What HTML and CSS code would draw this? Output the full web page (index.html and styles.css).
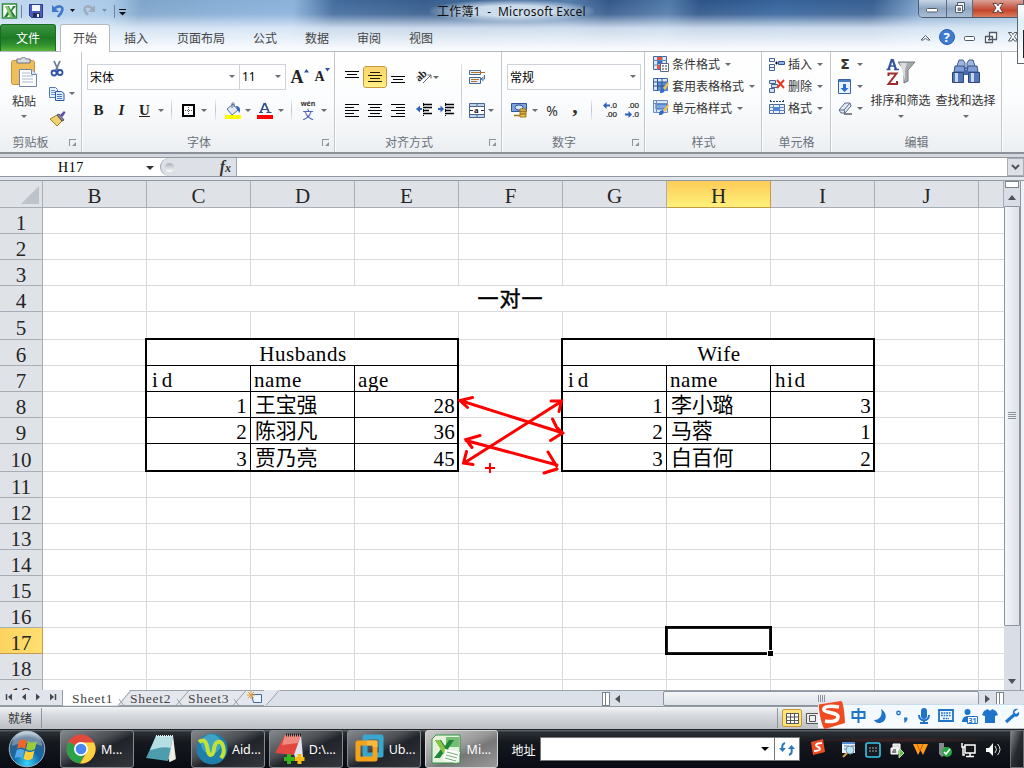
FILE: index.html
```html
<!DOCTYPE html>
<html lang="zh-CN">
<head>
<meta charset="utf-8">
<title>工作簿1 - Microsoft Excel</title>
<link rel="stylesheet" href="styles.css">
</head>
<body>
<div class="window">
  <header class="chrome">
    <div class="titlebar">
      <div class="quick">
        <svg width="124" height="24" viewBox="0 0 124 24">
          <rect x="2.500" y="4" width="14" height="14" fill="#fff" stroke="#2d8b38" stroke-width="1.500"/><path d="M5 6h4l2 4 2-4h3l-4 5 4 6h-4l-2-4-3 4H4l4-6z" fill="#25833a"/><path d="M5 6h3l5 11h-3z" fill="#8acb6f"/>
          <path d="M21.500 5v13M114.500 5v13" stroke="#71849a"/>
          <path d="M29.500 4.500h13v13H31.500l-2-2z" fill="#4c5cb8" stroke="#293c8e"/><path d="M32 5h8v6h-8z" fill="#f2f6ff"/><path d="M33 13h7v4h-7z" fill="#242f57"/><path d="M37 14h2v3h-2z" fill="#fff"/>
          <path d="M54 9c5-5 10-2 8 2-1 3-3 4-4 6" fill="none" stroke="#3f78c9" stroke-width="2.600"/><path d="M52 5v7h7z" fill="#3f78c9"/>
          <path d="M70 9h5l-2.500 3z" fill="#111"/>
          <path d="M93 9c-5-5-10-2-8 2 1 2 2 3 3 4" fill="none" stroke="#9dabba" stroke-width="2.400"/><path d="M95 5v7h-7z" fill="#9dabba"/>
          <path d="M102 9h5l-2.500 3z" fill="#7d8ea0"/>
          <path d="M119 9.500h7" stroke="#111"/><path d="M119 12h7l-3.500 3.500z" fill="#111"/>
        </svg>
      </div>
      <div class="caption">工作簿1&nbsp; -&nbsp; Microsoft Excel</div>
      <div class="winbtns">
        <span class="wb wmin"><svg width="14" height="16"><rect x="1.500" y="8.500" width="11" height="3.500" rx="1" fill="#fff" stroke="#555d69"/></svg></span>
        <span class="wb wmax"><svg width="14" height="16"><path d="M4.500 2.500h7v8h-7z" fill="#eee" stroke="#555d69"/><path d="M2.500 5.500h7v7h-7z" fill="#fff" stroke="#555d69"/><path d="M5 8h2.500v2.500H5z" fill="#8798af" stroke="#555d69" stroke-width=".8"/></svg></span>
        <span class="wb wclose"><svg width="14" height="16"><path d="M2 3.500h3.500L7 5.800l1.500-2.300H12L9 8l3 4.500H8.500L7 10.300 5.500 12.500H2L5 8z" fill="#fff" stroke="#56363c" stroke-width=".9"/></svg></span>
      </div>
    </div>
    <nav class="tabs">
      <span class="file">文件</span><span class="tab active">开始</span><span class="tab t2">插入</span><span class="tab t3">页面布局</span><span class="tab t4">公式</span><span class="tab t5">数据</span><span class="tab t5">审阅</span><span class="tab t5">视图</span>
      <svg class="help" width="106" height="28" viewBox="0 0 106 28">
        <path d="M3 16l4.500-4.500L12 16H9.500L7.500 14l-2 2z" fill="#fff" stroke="#505a66"/>
        <circle cx="29" cy="13" r="7.500" fill="#3f7bd0" stroke="#2b5eae"/><text x="25.500" y="18" class="q">?</text>
        <rect x="46.500" y="12.500" width="10" height="4" rx="1" fill="#fff" stroke="#505a66"/>
        <path d="M71.500 8.500h7v7h-7zM67.500 12.500h7v6h-7z" fill="#fff" stroke="#505a66" stroke-width="1.300"/><path d="M70 15h2v1.500h-2z" fill="#505a66"/>
        <path d="M90.500 8.500h3l1.500 2 1.500-2h3l-3 4 3 4.500h-3l-1.500-2.500-1.500 2.500h-3l3-4.500z" fill="#fff" stroke="#505a66"/>
      </svg>
    </nav>
  </header>

  <section class="ribbon">
    <div class="group g-clip">
      <div class="body row top">
        <div class="big paste">
          <svg width="28" height="32" viewBox="0 0 28 32"><rect x="1.500" y="3.500" width="23" height="24" rx="2" fill="#f0bd5c" stroke="#c99239"/><path d="M7 2h4c0-2 5-2 5 0h4v4H7z" fill="#d7dce2" stroke="#6d747c"/><path d="M9.500 12.500h12l5 5v12h-17z" fill="#fff" stroke="#6d83a8"/><path d="M12 16h8M12 19h11M12 22h11M12 25h11" stroke="#a9b8d0"/><path d="M21.500 12.500v5h5" fill="#dce6f5" stroke="#6d83a8"/></svg>
          <span>粘贴</span><i class="dd"></i>
        </div>
        <div class="stack">
          <div class="row"><svg width="16" height="18" viewBox="0 0 16 18"><path d="M5 1l4.500 10M11 1L6.500 11" stroke="#6b7d95" stroke-width="1.800"/><circle cx="5" cy="13" r="2.500" fill="none" stroke="#2b52ad" stroke-width="1.800"/><circle cx="11" cy="12.500" r="2.500" fill="none" stroke="#2b52ad" stroke-width="1.800"/></svg></div>
          <div class="row"><svg width="16" height="16" viewBox="0 0 16 16"><path d="M.5 1.500h6l2 2v8h-8z" fill="#e8f1ff" stroke="#5377b0"/><path d="M2 4.500h4M2 6.500h4M2 8.500h4" stroke="#6b96d7"/><path d="M6.500 5.500h6l2.500 2v7H6.500z" fill="#dceaff" stroke="#2f579c"/><path d="M8 8.500h5M8 10.500h5M8 12.500h5" stroke="#4a79c2"/></svg><i class="dd gap4"></i></div>
          <div class="row"><svg width="18" height="16" viewBox="0 0 18 16"><path d="M1 8l7-4 5 6-5 5z" fill="#efd170" stroke="#a57f28"/><path d="M8 4l2-1 5 6-2 1z" fill="#8b8ba0" stroke="#4d4d68"/><path d="M11 4l4-4 1.500 1.500L13.500 6z" fill="#5a4da6"/></svg></div>
        </div>
      </div>
      <div class="label">剪贴板<b class="dl"></b></div>
    </div>

    <div class="group g-font">
      <div class="body">
        <div class="row r1"><div class="combo c153">宋体<i class="dd"></i></div><div class="combo c47">11<i class="dd"></i></div>
          <span class="slot w25 srf big-a">A<svg width="5" height="4"><path d="M0 3.500h5L2.500 0z" fill="#3152a5"/></svg></span><span class="slot w20 srf small-a">A<svg width="5" height="4"><path d="M0 0h5L2.500 3.500z" fill="#3152a5"/></svg></span></div>
        <div class="row r2">
          <span class="slot w23 srf">B</span><span class="slot w23 srf it">I</span><span class="slot w23 srf un">U</span><span class="slot w10"><i class="dd"></i></span><span class="slot w10"><i class="sep"></i></span>
          <span class="slot w24"><svg width="13" height="13"><rect x="1" y="1" width="11" height="11" fill="#fff" stroke="#000" stroke-width="2"/><path d="M6.500 3v8M3 6.500h8" stroke="#555" stroke-dasharray="1 1"/></svg></span><span class="slot w8"><i class="dd"></i></span><span class="slot w14"><i class="sep"></i></span>
          <span class="slot w21"><svg width="16" height="17" viewBox="0 0 16 17"><path d="M2 7l6-5 5 6-6 5z" fill="#e1eaf6" stroke="#567294"/><path d="M7 6V1.500c0-1 2-1 2 0V5" fill="none" stroke="#567294"/><path d="M11 4c3 0 5 2 3.500 7L12 7z" fill="#2f67b9"/><path d="M0 13h16v4H0z" fill="#ff0"/></svg></span><span class="slot w9"><i class="dd"></i></span>
          <span class="slot w25"><svg width="16" height="17" viewBox="0 0 16 17"><path d="M3.500 10.500L7.500 1M8 1l4 9.500" fill="none" stroke="#304f8c" stroke-width="1.800"/><path d="M2 10.500h4M9.500 10.500h5M5 7.500h5.500" fill="none" stroke="#304f8c" stroke-width="1.200"/><path d="M0 13h16v4H0z" fill="red"/></svg></span><span class="slot w7"><i class="dd"></i></span><span class="slot w14"><i class="sep"></i></span>
          <span class="slot w20 wen"><em>wén</em><strong>文</strong></span><span class="slot w12"><i class="dd"></i></span>
        </div>
      </div>
      <div class="label">字体<b class="dl"></b></div>
    </div>

    <div class="group g-align">
      <div class="body">
        <div class="row r1">
          <span class="slot w23"><svg width="14" height="13"><path d="M0 .5h14M2 3.500h10M0 6.500h14" stroke="#000"/></svg></span>
          <span class="slot w24 hot"><svg width="14" height="10"><path d="M2 .5h10M0 3.500h14M2 6.500h10M0 9.500h14" stroke="#221d10"/></svg></span>
          <span class="slot w22"><svg width="14" height="14"><path d="M0 6.500h14M2 9.500h10M0 12.500h14" stroke="#000"/></svg></span>
          <svg class="gap8 vis" width="15" height="14" viewBox="0 0 15 14"><text x="0" y="9" class="ab" transform="rotate(-42 5 8)">ab</text><path d="M6 13l8-8m-3.500 0H14v3.500" fill="none" stroke="#666"/></svg><span class="slot w8"><i class="dd"></i></span>
          <svg class="gap29" width="17" height="16" viewBox="0 0 17 16"><path d="M.5 1.500h11v4H.5zM.5 8.500h11v6H.5z" fill="#e6effb" stroke="#4a6992"/><path d="M2 3.500h14M2 10.500h8M2 12.500h6" stroke="#b5702d"/><path d="M15.500 6v4H13m1.500-2L12 10l2.500 2" fill="none" stroke="#416ba5"/></svg>
        </div>
        <div class="row r2">
          <span class="slot w23"><svg width="14" height="13"><path d="M0 .5h14M0 3.500h9M0 6.500h14M0 9.500h9M0 12.500h14" stroke="#000"/></svg></span>
          <span class="slot w24"><svg width="14" height="13"><path d="M0 .5h14M2 3.500h10M0 6.500h14M2 9.500h10M0 12.500h14" stroke="#000"/></svg></span>
          <span class="slot w22"><svg width="14" height="13"><path d="M0 .5h14M5 3.500h9M0 6.500h14M5 9.500h9M0 12.500h14" stroke="#000"/></svg></span>
          <svg class="gap7" width="16" height="14"><path d="M7 1.500h9M7 4.500h9M7 7.500h6M7 10.500h9" stroke="#000" stroke-width="1.500"/><path d="M7.500 0v14" stroke="#000" stroke-dasharray="1 1"/><path d="M0 6l4-3.500V5h2v2H4v2.500z" fill="#2e60bd"/></svg>
          <svg class="gap6" width="16" height="14"><path d="M7 1.500h9M7 4.500h9M7 7.500h6M7 10.500h9" stroke="#000" stroke-width="1.500"/><path d="M7.500 0v14" stroke="#000" stroke-dasharray="1 1"/><path d="M6 6L2.500 2.500V5H0v2h2.500v2.500z" fill="#2e60bd"/></svg>
          <svg class="gap15" width="16" height="15"><path d="M.5.5h15v14H.5z" fill="#bfd3ec" stroke="#49678f"/><path d="M0 3.500h16M0 11.500h16M8 0v4M8 11v4" stroke="#49678f"/><path d="M1 4h14v7H1z" fill="#fff"/><path d="M1 7.500h3m8 0h3" stroke="#222"/><text x="5" y="10" class="aa">a</text></svg><span class="slot w12"><i class="dd"></i></span>
        </div>
      </div>
      <div class="label">对齐方式<b class="dl"></b></div>
    </div>

    <div class="group g-num">
      <div class="body">
        <div class="row r1"><div class="combo c134">常规<i class="dd"></i></div></div>
        <div class="row r2">
          <span class="slot w24"><svg width="17" height="16" viewBox="0 0 17 16"><path d="M.5 1.500h15v8H.5z" fill="#7fa3d8" stroke="#2e549a"/><ellipse cx="8" cy="5.500" rx="4" ry="2.500" fill="#d7e6fa" stroke="#2e549a"/><path d="M9 7h6v8H9z" fill="#ecc151" stroke="#a17618"/><path d="M9 9.500h6M9 12h6M3 13.500h6" stroke="#a17618" stroke-width="1.500"/></svg></span><span class="slot w7"><i class="dd"></i></span>
          <span class="slot w28 pct">%</span><span class="slot w18 comma">,</span><span class="slot w14"><i class="sep"></i></span>
          <span class="slot w21 dec"><em><svg width="7" height="7"><path d="M0 3.500L3.500 0v2.500H7v2H3.500V7z" fill="#2e60bd"/></svg>.0</em><em>.00</em></span>
          <span class="slot w22 dec"><em>.00</em><em><svg width="7" height="7"><path d="M7 3.500L3.500 0v2.500H0v2h3.500V7z" fill="#2e60bd"/></svg>.0</em></span>
        </div>
      </div>
      <div class="label">数字<b class="dl"></b></div>
    </div>

    <div class="group g-style">
      <div class="body list">
        <div class="row"><svg width="16" height="16"><path d="M.5.5h13v13H.5z" fill="#dce8f8" stroke="#3d67a6"/><path d="M0 4.500h14M0 9h14M4.500 0v14M9 0v14" stroke="#5c83bb"/><path d="M4 1h5v3H4zM4 9h4v4H4z" fill="#e5523e"/><path d="M5 5h4v3H5z" fill="#3a6cc0"/><path d="M7.500 7.500h8v8h-8z" fill="#fff" stroke="#5e6b7d"/><path d="M9 10h2m1 0h2M9 13h2m1 0h2" stroke="#333"/></svg><span>条件格式</span><i class="dd"></i></div>
        <div class="row"><svg width="16" height="16"><path d="M.5.500h14v12H.5z" fill="#dce8f8" stroke="#3d67a6"/><path d="M4 4h11v9H4z" fill="#5e8dd0"/><path d="M0 4h15M0 8h15M4.500 0v13M9 0v13" stroke="#2e569b"/><path d="M7 15c0-4 2-5 4-5l1 2c-1 3-3 3-5 3z" fill="#2f6cc8"/><path d="M10 10l5-6 1 2-4 6z" fill="#f1c34f"/></svg><span>套用表格格式</span><i class="dd"></i></div>
        <div class="row"><svg width="16" height="16"><path d="M.5.500h14v12H.5z" fill="#dce8f8" stroke="#6d8fbe"/><path d="M3 4h11v5H3z" fill="#7ba7e5" stroke="#3d67a6"/><path d="M3.500 0v13M0 3.500h15" stroke="#6d8fbe"/><path d="M6 15c0-4 2-5 4-5l1 2c-1 3-3 3-5 3z" fill="#2f6cc8"/><path d="M10 10l5-6 1 2-4 6z" fill="#f1c34f"/></svg><span>单元格样式</span><i class="dd"></i></div>
      </div>
      <div class="label">样式</div>
    </div>

    <div class="group g-cell">
      <div class="body list">
        <div class="row"><svg width="16" height="15"><path d="M.5 1.500h5v3h-5zM.5 7.500h5v6h-5zM0 10.500h6" fill="#edf3fb" stroke="#46658f"/><path d="M9.500 4.500h6v3h-6z" fill="#8fb4e6" stroke="#2c559b"/><path d="M6 6h3M7.500 4.500v3" stroke="#000"/></svg><span>插入</span><i class="dd"></i></div>
        <div class="row"><svg width="16" height="15"><path d="M.5 1.500h6v3h-6zM.5 9.500h5v4h-5zM2.500 5.500h6v3h-6z" fill="#cfe0f5" stroke="#46658f"/><path d="M8 1l7 8M15 1L8 9" stroke="#e73a23" stroke-width="2"/></svg><span>删除</span><i class="dd"></i></div>
        <div class="row"><svg width="16" height="16"><path d="M1 1.500h14M1.500 0v3M14.500 0v3" stroke="#243c66" stroke-dasharray="2 1"/><path d="M.5 4.500h15v9H.5z" fill="#e8f0fb" stroke="#46658f"/><path d="M0 7.500h16M0 10.500h16M4.500 4v10M10.500 4v10" stroke="#6384b2"/><path d="M5 7h6v4H5z" fill="#4c86df"/></svg><span>格式</span><i class="dd"></i></div>
      </div>
      <div class="label">单元格</div>
    </div>

    <div class="group g-edit">
      <div class="body row top">
        <div class="list edits">
          <div class="row"><span class="slot w14 sig">Σ</span><i class="dd"></i></div>
          <div class="row"><svg width="14" height="15"><path d="M.5.500h12v14H.5z" fill="#e9f2ff" stroke="#3a63a5"/><path d="M1 1h11v2H1z" fill="#4c7bc5"/><path d="M5 5h3v4h2.500L6.500 13 2.500 9H5z" fill="#2b6bd0"/></svg><i class="dd"></i></div>
          <div class="row"><svg width="14" height="13"><path d="M1 8l6-7h5l1 3-6 7H3z" fill="#e3eaf5" stroke="#596c8b"/><path d="M1 8h5l6-7M6 8l1 3" fill="none" stroke="#596c8b"/><path d="M6 12h8" stroke="#111"/></svg><i class="dd"></i></div>
        </div>
        <div class="big b2">
          <svg width="30" height="30" viewBox="0 0 30 30"><path d="M12 5h17l-7 8v11l-4 2V13z" fill="#a6a9ad" stroke="#777b80"/><path d="M14 6h7l-2 7v11" fill="#dadcde"/><path d="M2.500 12.500L6 2M6.500 2L10 12.500" fill="none" stroke="#31569e" stroke-width="2.300"/><path d="M.5 12.500h4M8 12.500h5M4 9h5" fill="none" stroke="#31569e" stroke-width="1.300"/><path d="M2.500 19v-2.500h8L2.500 27h8.500v-3" fill="none" stroke="#9c2f2d" stroke-width="2"/></svg>
          <span>排序和筛选</span><i class="dd"></i>
        </div>
        <div class="big b3">
          <svg width="28" height="30" viewBox="0 0 28 30"><path d="M7 3h4l2 3v5h2V6l2-3h4l3 9H4z" fill="#9fb7e0" stroke="#3e5a92"/><path d="M3 9h9l1 6H2zM16 9h9l1 6H15z" fill="#7f9fd6" stroke="#36528b"/><path d="M.5 15.500h11v10H.5zM16.500 15.500h11v10h-11z" fill="#5476b8" stroke="#2d4679"/><path d="M3 16h3v9H3zM19 16h3v9h-3z" fill="#c8d8f3"/><path d="M12 13h4v5h-4z" fill="#476aac"/></svg>
          <span>查找和选择</span><i class="dd"></i>
        </div>
      </div>
      <div class="label">编辑</div>
    </div>
  </section>

  <div class="fbar">
    <div class="namebox"><span>H17</span><i class="dd dark"></i></div>
    <div class="fx"><i class="knob"></i><span>f<small>x</small></span></div>
    <div class="finput"></div>
    <div class="fdrop"><svg width="9" height="6"><path d="M1 1l3.500 3.500L8 1" fill="none" stroke="#50565e" stroke-width="2"/></svg></div>
  </div>

  <main class="work">
    <div class="sheet">
      <table>
        <colgroup><col class="c0"><col><col><col><col><col><col><col><col><col><col class="cz"></colgroup>
        <tr class="hd"><th><svg class="corner" width="20" height="20"><path d="M19 1v18H1z" fill="#bcc3cb"/></svg></th><th>B</th><th>C</th><th>D</th><th>E</th><th>F</th><th>G</th><th class="sel">H</th><th>I</th><th>J</th><th></th></tr>
        <tr><th>1</th><td></td><td></td><td></td><td></td><td></td><td></td><td></td><td></td><td></td><td></td></tr>
        <tr><th>2</th><td></td><td></td><td></td><td></td><td></td><td></td><td></td><td></td><td></td><td></td></tr>
        <tr><th>3</th><td></td><td></td><td></td><td></td><td></td><td></td><td></td><td></td><td></td><td></td></tr>
        <tr><th>4</th><td></td><td class="ttl" colspan="7">一对一</td><td></td><td></td></tr>
        <tr class="tall"><th>5</th><td></td><td></td><td></td><td></td><td></td><td></td><td></td><td></td><td></td><td></td></tr>
        <tr><th>6</th><td></td><td class="k frame cap" colspan="3">Husbands</td><td></td><td class="k frame cap" colspan="3">Wife</td><td></td><td></td></tr>
        <tr><th>7</th><td></td><td class="k id">id</td><td class="k">name</td><td class="k">age</td><td></td><td class="k id">id</td><td class="k">name</td><td class="k hid">hid</td><td></td><td></td></tr>
        <tr><th>8</th><td></td><td class="k n">1</td><td class="k zh">王宝强</td><td class="k n">28</td><td></td><td class="k n">1</td><td class="k zh">李小璐</td><td class="k n">3</td><td></td><td></td></tr>
        <tr><th>9</th><td></td><td class="k n">2</td><td class="k zh">陈羽凡</td><td class="k n">36</td><td></td><td class="k n">2</td><td class="k zh">马蓉</td><td class="k n">1</td><td></td><td></td></tr>
        <tr class="tall"><th>10</th><td></td><td class="k n">3</td><td class="k zh">贾乃亮</td><td class="k n">45</td><td></td><td class="k n">3</td><td class="k zh">白百何</td><td class="k n">2</td><td></td><td></td></tr>
        <tr><th>11</th><td></td><td></td><td></td><td></td><td></td><td></td><td></td><td></td><td></td><td></td></tr>
        <tr><th>12</th><td></td><td></td><td></td><td></td><td></td><td></td><td></td><td></td><td></td><td></td></tr>
        <tr><th>13</th><td></td><td></td><td></td><td></td><td></td><td></td><td></td><td></td><td></td><td></td></tr>
        <tr><th>14</th><td></td><td></td><td></td><td></td><td></td><td></td><td></td><td></td><td></td><td></td></tr>
        <tr><th>15</th><td></td><td></td><td></td><td></td><td></td><td></td><td></td><td></td><td></td><td></td></tr>
        <tr><th>16</th><td></td><td></td><td></td><td></td><td></td><td></td><td></td><td></td><td></td><td></td></tr>
        <tr><th class="sel">17</th><td></td><td></td><td></td><td></td><td></td><td></td><td class="cursor"></td><td></td><td></td><td></td></tr>
        <tr><th>18</th><td></td><td></td><td></td><td></td><td></td><td></td><td></td><td></td><td></td><td></td></tr>
        <tr><th>19</th><td></td><td></td><td></td><td></td><td></td><td></td><td></td><td></td><td></td><td></td></tr>
      </table>
      <svg class="ink" width="120" height="90" viewBox="450 390 120 90">
        <path d="M460 400.500L563 433M472.500 397.500L460 400.500l7.500 7M552.500 419l4 8 6 6-12 7.500"/>
        <path d="M465 462.500L560.500 402M466.500 451.500l-3 11.500 9.500 1.500M551 401l10.500 0-2.500 10.500"/>
        <path d="M466 440.500L557 465M480 435.500l-14 4 6 8M548 452l8.500 14M557 469l-13 4"/>
        <path class="thin" d="M485 468h10M490 463v10"/>
      </svg>
    </div>
    <div class="vscroll">
      <i class="split"></i><i class="tri up"></i><div class="vthumb"><i class="grip"></i></div><i class="tri down"></i>
    </div>
  </main>

  <div class="sheetbar">
    <svg width="264" height="16" viewBox="0 0 264 16">
      <path d="M0 0h62v16H0z" fill="#e1e5eb"/><path d="M62.500 0v15.500H0" fill="none" stroke="#949ca6"/>
      <path d="M6.500 4v6M55.500 4v6" stroke="#404854" stroke-width="1.500"/><path d="M12 3.500v7L8 7zM26 3.500v7L22 7zM36 3.500v7L40 7zM50 3.500v7L54 7z" fill="#404854"/>
      <path d="M63 0h67l-12 15H63z" fill="#fff"/><path d="M130 1h58l-11 14h-58zM188 1h58l-11 14h-58zM246 1h34l-11 14h-34z" fill="#e4e8ee"/>
      <path d="M118 15.500L131 .5M176 15.500L189 .5M233 15.500L246 .5M119 9l5 6.500M177 9l5 6.500M234 9l5 6.500" stroke="#98a0aa" fill="none"/>
      <path d="M119 15.500h145" stroke="#98a0aa"/>
      <path d="M251.500 4.500h10v8h-8z" fill="#edf4ff" stroke="#4467a8"/><path d="M251 1v8M247 5h8M248 2l6 6M254 2l-6 6" stroke="#e5a12f"/>
      <text class="st on" x="72" y="13">Sheet1</text><text class="st" x="130" y="13">Sheet2</text><text class="st" x="188" y="13">Sheet3</text>
    </svg>
    <svg class="slash" width="18" height="16"><path d="M0 0h16L2 15H0z" fill="#e4e8ee"/><path d="M2 15.500L15 .5" stroke="#98a0aa"/></svg>
    <div class="hscroll"><i class="hsplit"></i><i class="tri left"></i><div class="hthumb"><i class="vgrip"></i></div><i class="tri right"></i><i class="hsplit end"></i></div>
  </div>

  <div class="status"><span class="ready">就绪</span><i class="vl"></i><i class="vl two"></i>
    <span class="view on"><svg width="13" height="11"><path d="M.5.500h12v10H.5zM0 4h13M0 7.500h13M4.500 0v11M8.500 0v11" fill="#fff" stroke="#555"/></svg></span>
    <span class="view"><svg width="13" height="11"><path d="M.5.500h12v10H.5zM3.500 2.500h6v6h-6z" fill="#eee" stroke="#555"/></svg></span>
  </div>

  <footer class="taskbar">
    <svg class="orb" width="38" height="38" viewBox="0 0 38 38">
      <defs><radialGradient id="orb" cx=".5" cy=".9" r=".85"><stop offset="0" stop-color="#38d7fa"/><stop offset=".45" stop-color="#1368a8"/><stop offset=".85" stop-color="#3a5c80"/><stop offset="1" stop-color="#a4bccb"/></radialGradient></defs>
      <circle cx="19" cy="19" r="17.800" fill="url(#orb)" stroke="#9db7c6"/><path d="M4 16a15 15 0 0 1 30 0c-9-4-21-4-30 0z" fill="#fff" opacity=".3"/>
      <path d="M11 11c3-2 5-2 8 0l-2 8c-3-2-5-2-8 0z" fill="#f0652b"/><path d="M20 11c3 2 5 2 9 0l-2 8c-4 2-6 2-9 0z" fill="#9ccb3a"/><path d="M8.500 20.500c3-2 5-2 8 0l-2 8c-3-2-5-2-8 0z" fill="#55a9e8"/><path d="M17.500 20.500c3 2 5 2 9 0l-2 8c-4 2-6 2-9 0z" fill="#fbcf3c"/>
    </svg>
    <div class="task t-chrome"><svg width="30" height="30" viewBox="0 0 30 30"><circle cx="15" cy="15" r="14.500" fill="#e3493a"/><path d="M15 15L2.500 7.800A14.500 14.500 0 0 0 14 29.500L20 19z" fill="#2ba14b"/><path d="M15 8.500h13A14.500 14.500 0 0 1 14 29.500L21 18z" fill="#fcd23f"/><circle cx="15" cy="15" r="7" fill="#fff"/><circle cx="15" cy="15" r="5.300" fill="#4888f2"/></svg><span>M...</span></div>
    <svg class="note" width="32" height="32" viewBox="0 0 32 32"><path d="M11 3h17l3 23-6 3z" fill="#d7d6c9"/><path d="M11 3h17l-5 25L1 25z" fill="#4e9dae"/><path d="M11 3h17l-2.500 12c-8-2-14 1-20.500 2z" fill="#b5dfe5"/><path d="M11 3h17" stroke="#eee" stroke-width="2" stroke-dasharray="1 1"/><path d="M28 4l2 22-6 3z" fill="#f0efe6"/></svg>
    <div class="task t-aid"><svg width="32" height="32" viewBox="0 0 32 32"><circle cx="16" cy="16" r="15.500" fill="#1e7fac"/><circle cx="15" cy="11" r="10" fill="#54bdd5" opacity=".6"/><path d="M3 9c7-5 8 4 9 9s5 6 6-2 7-10 9-3 0 9-2 12" fill="none" stroke="#c2e333" stroke-width="4"/></svg><span>Aid...</span></div>
    <div class="task t-d"><svg width="32" height="32" viewBox="0 0 32 32"><path d="M12 2h16l2 22-7 2z" fill="#dce5ef"/><path d="M12 2h16l-7 20L2 20z" fill="#e1483f"/><path d="M12 2h16l-3 8-16 2z" fill="#ef8a80"/><path d="M13 2h15" stroke="#222" stroke-width="3" stroke-dasharray="1 1"/><path d="M16 21v10M11 26h10" stroke="#36b51b" stroke-width="4"/><path d="M26.500 21v10M21.500 26h10" stroke="#f4bd13" stroke-width="4"/></svg><span>D:\...</span></div>
    <div class="task t-ub"><svg width="30" height="30" viewBox="0 0 30 30"><path d="M10 3h16v18H10z" fill="none" stroke="#38a7d0" stroke-width="5" stroke-linejoin="round"/><path d="M3 9h17v16H3z" fill="none" stroke="#f5a21d" stroke-width="5" stroke-linejoin="round"/><path d="M20 13V9h-8" fill="none" stroke="#f8b940" stroke-width="5"/></svg><span>Ub...</span></div>
    <div class="task t-xl"><svg width="31" height="31" viewBox="0 0 31 31"><path d="M5 1h24v28H1V5z" fill="#e4f2dc" stroke="#2f9443"/><path d="M15 3h13v10H15z" fill="#75bd72"/><path d="M4 6h6l4 6 4-6h5l-6 9 6 9h-6l-4-6-4 6H3l7-9z" fill="#1f853a"/><path d="M4 6h5l11 18h-5z" fill="#88c442"/><path d="M14 15l15 3-3 11-14-3z" fill="#fff"/><path d="M16 18l11 3M15 21l11 3M14 24l11 3" stroke="#73ac73"/></svg><span>Mi...</span></div>
    <span class="addr">地址</span>
    <div class="addrbox"><i class="dd dark"></i></div>
    <div class="refresh"><svg width="16" height="14"><path d="M6 1C3 2 3 4 3.500 8M10 13c3-1 3-3 2.500-7" fill="none" stroke="#2978bf" stroke-width="2"/><path d="M0 6h7L3.500 10zM9 7h7l-3.500-4z" fill="#2978bf"/></svg></div>
    <svg class="tray" width="224" height="38" viewBox="800 729 224 38">
      <defs><linearGradient id="desk" x2="1" y2="1"><stop stop-color="#8a8d91"/><stop offset=".5" stop-color="#2a2d31"/><stop offset="1" stop-color="#15181c"/></linearGradient></defs>
      <path d="M811 741l12-3 2 13-12 3z" fill="#ed4e25"/><path d="M822 742c-7 0-7 3-4 4s3 4-4 4" fill="none" stroke="#fff" stroke-width="2"/>
      <path d="M842 741h13v11h-13z" fill="#e9f2fb"/><path d="M842 741h13v2h-13z" fill="#4e8bd1"/><path d="M844 745h5M844 748h4M851 745h4" stroke="#577ca7"/><circle cx="850" cy="749" r="4" fill="#b9e5f5" stroke="#7190a9"/><path d="M847 752l-4 4" stroke="#d3a451" stroke-width="2"/>
      <rect x="866" y="742" width="14" height="14" rx="2" fill="#161b1f" stroke="#37c7eb" stroke-width="1.600"/><path d="M869 747h8M869 750h8" stroke="#aaa" stroke-dasharray="2 1"/>
      <path d="M893 743h7v6h-7zM891 747h7v6h-7z" fill="#ddd" stroke="#fff"/><path d="M893 749h3M892 751h4" stroke="#222"/><path d="M899 747l5 5-5 5z" fill="#56c934" stroke="#eee" stroke-width=".8"/>
      <path d="M913 743h15l-5 11-2.500-5-2.500 5z" fill="#ff9b19"/><path d="M917 743l3 7 3-7" fill="none" stroke="#cc5b00"/>
      <path d="M939 742h5v4h2v7l-4 3-3-3z" fill="#858a8e"/><circle cx="947" cy="751" r="5" fill="#23a93e"/><path d="M944 751l2 2 4-5" fill="none" stroke="#fff" stroke-width="1.600"/>
      <path d="M965 744h10v8h-10zM970 752v3M966 755.500h8M962 742v4h3M963 746v8h2" fill="#15181b" stroke="#fff" stroke-width="1.500"/>
      <path d="M986 747h3l4-5v13l-4-4h-3z" fill="#fff"/><path d="M995 745q3 3.500 0 7M997.500 743q5 5.500 0 11" fill="none" stroke="#ddd"/>
      <path d="M1010.500 729.500h13v37h-13z" fill="url(#desk)" stroke="#6d7277"/>
    </svg>
  </footer>

  <div class="ime"><svg width="206" height="30" viewBox="818 700 206 30">
    <path d="M819 704.500l22-3.500c3 0 4 22 4 22l-20 6c-3 0-7-21-6-24.500z" fill="#f04b20"/><path d="M839 707c-11-2-16 0-15 3s14 2 14 7-8 5-13 4" fill="none" stroke="#fff" stroke-width="3.600"/>
    <g fill="none" stroke="#1d74c9" stroke-width="2"><path d="M852.500 712h12v6h-12zM858.500 708v15"/><path d="M939 710h14v11h-14z" stroke-width="1.800"/><path d="M941 713h10M941 715.500h10M943 718.500h6" stroke-width="1.300" stroke-dasharray="1.800 .8"/><circle cx="898.500" cy="713" r="1.700" stroke-width="1.400"/><path d="M919 715c0 7 10 7 10 0M924 720v3M920 723h8"/></g>
    <g fill="#1d74c9"><path d="M881 709c8 5 5 14-2 14-2 0-4-1-5-3 6 0 9-5 7-11z"/><path d="M904 717.500h3.500c0 3-1 4-3 5.500z"/><rect x="921" y="708" width="6" height="11" rx="3"/><circle cx="967.500" cy="712" r="3"/><path d="M962 722c0-8 11-8 11 0z"/><path d="M984 711l4-2c1 2 3 2 4 0l4 2 2 4-3 1v7h-10v-7l-3-1z"/></g>
    <path d="M967.500 716.500h10v7h-10z" fill="#fff" stroke="#1d74c9"/><text x="968.500" y="723" class="n31">31</text>
    <path d="M1006 722l8-7" stroke="#1d74c9" stroke-width="3"/><path d="M1018 709c-4-1-7 3-4 7 3 2 6-1 5-4l-3 2-2-2z" fill="#1d74c9"/>
  </svg></div>
  <div class="peek"></div>
</div>
</body>
</html>
```
FILE: styles.css
```css
*, *::before, *::after { box-sizing: border-box; }
body { margin: 0; font-family: "Noto Sans CJK SC", "Noto Sans", sans-serif; font-size: 12px; color: #333; }
.window { position: relative; width: 1024px; height: 768px; overflow: hidden; display: flex; flex-direction: column; background: #dfe3e8; }
svg { display: block; flex: none; }
.vis { overflow: visible; }
i, em { font-style: normal; }

.chrome { height: 52px; flex: none; background: linear-gradient(180deg, transparent 0, rgba(228,239,250,.1) 14px, rgba(228,239,250,.85) 28px, #fafcfe 50px), linear-gradient(100deg, #c3d9ef 0, #a9c9e8 110px, #7fa4ca 140px, #85acd4 210px, #8bb2da 290px, #426b9c 330px, #375d8d 420px, #557da9 560px, #34588a 600px, #5079a8 660px, #2d5488 690px, #35639b 770px, #375e90 860px, #83a8ce 910px, #a0bede 1024px); }
.titlebar { height: 24px; display: flex; position: relative; }
.quick { width: 430px; }
.quick svg { overflow: visible; }
.caption { width: 164px; height: 22px; line-height: 23px; padding-left: 7px; font-family: "Noto Sans", "Noto Sans CJK SC", sans-serif; font-size: 12px; letter-spacing: .2px; white-space: nowrap; color: #111; background: radial-gradient(ellipse, rgba(218,231,245,.9) 35%, rgba(218,231,245,0) 74%); }
.winbtns { margin-left: 324px; width: 106px; height: 18px; display: flex; border: 1px solid #4e5c70; border-top: 0; border-radius: 0 0 5px 5px; overflow: hidden; }
.wb { display: flex; justify-content: center; background: linear-gradient(#c7d5e6, #8fa6c2 50%, #a9bdd5); border-right: 1px solid #5b6c82; }
.wmin { width: 28px; } .wmax { width: 27px; } .wclose { width: 50px; background: linear-gradient(#dba194, #c65440 50%, #c54428 60%, #db7d5d); border: 0; }

.tabs { height: 28px; display: flex; border-bottom: 1px solid #b6babf; color: #444; line-height: 27px; }
.file { width: 56px; background: linear-gradient(#3b9440, #1d7a24 50%, #2e8f2d 75%, #5cb63b); color: #fff; text-align: center; border-radius: 3px 3px 0 0; border: 1px solid #1c6c27; border-bottom: 0; line-height: 26px; }
.tab { white-space: nowrap; margin-left: 27px; }
.tab.active { margin-left: 4px; width: 50px; height: 28px; text-align: center; background: #fff; border: 1px solid #b6babf; border-bottom: 0; border-radius: 3px 3px 0 0; line-height: 25px; }
.tab.t2 { margin-left: 14px; } .tab.t3 { margin-left: 29px; } .tab.t4, .tab.t5 { margin-left: 28px; }
.help { margin-left: auto; }
.q { font: bold 13px "Noto Sans", sans-serif; fill: #fff; }

.ribbon { height: 102px; flex: none; display: flex; background: linear-gradient(#fff, #fbfcfd 50%, #eceff2); border-bottom: 2px solid #8b9199; }
.group { border-right: 1px solid #c2c7ce; box-shadow: 1px 0 #fff; display: flex; flex-direction: column; flex: none; margin-right: 1px; }
.g-clip { width: 82px; } .g-font { width: 252px; } .g-align { width: 166px; } .g-num { width: 142px; } .g-style { width: 116px; } .g-cell { width: 68px; } .g-edit { width: 170px; }
.body { height: 81px; }
.label { height: 19px; line-height: 18px; text-align: center; color: #6b727b; position: relative; }
.g-clip .label { padding-right: 20px; } .g-font .label, .g-align .label, .g-num .label { padding-right: 19px; }
.dl { position: absolute; right: 5px; top: 6px; width: 7px; height: 7px; border-left: 1px solid #8d949d; border-top: 1px solid #8d949d; }
.dl::after { content: ""; position: absolute; left: 2px; top: 2px; border-left: 4px solid transparent; border-bottom: 4px solid #8d949d; }
.row { display: flex; align-items: center; white-space: nowrap; }
.row.top { align-items: flex-start; }
.slot { display: flex; align-items: center; justify-content: center; flex: none; }
.w7 { width: 7px; } .w8 { width: 8px; } .w9 { width: 9px; } .w10 { width: 10px; } .w12 { width: 12px; } .w14 { width: 14px; } .w18 { width: 18px; } .w20 { width: 20px; } .w21 { width: 21px; } .w22 { width: 22px; } .w23 { width: 23px; } .w24 { width: 24px; } .w25 { width: 25px; } .w28 { width: 28px; }
.gap4 { margin-left: 4px; } .gap6 { margin-left: 6px; } .gap7 { margin-left: 7px; } .gap8 { margin-left: 8px; } .gap15 { margin-left: 15px; } .gap29 { margin-left: 29px; }
.dd { width: 0; height: 0; flex: none; border: 3px solid transparent; border-top: 3px solid #686d74; border-bottom: 0; }
.dd.dark { border-width: 4px 4px 0; border-top-color: #333; }
.sep { width: 1px; height: 20px; background: linear-gradient(#e9ebee, #bfc4ca 50%, #e9ebee); }

.paste { width: 48px; padding-top: 5px; }
.big { display: flex; flex-direction: column; align-items: center; color: #333; }
.big span { line-height: 18px; }
.big .dd { margin-top: 6px; }
.paste span { padding-top: 3px; }
.paste .dd { margin-top: 5px; }
.stack .row { height: 25px; }
.stack { padding: 4px 0 0 1px; }
.r1 { height: 26px; margin-top: 12px; } .r2 { height: 30px; margin-top: 5px; }
.g-font .body, .g-align .body, .g-num .body { padding-left: 4px; }
.combo { height: 26px; border: 1px solid #cfd3d9; background: #fff; display: flex; justify-content: space-between; align-items: center; padding: 0 4px 2px 2px; color: #000; line-height: 21px; }
.c153 { width: 153px; } .c47 { width: 47px; margin-left: -1px; font-family: "Noto Sans"; } .c134 { width: 134px; }
.srf { font-family: "Liberation Serif", serif; font-weight: bold; font-size: 15px; color: #222; }
.it { font-style: italic; } .un { text-decoration: underline; }
.big-a { font-size: 18px; align-items: flex-start; line-height: 22px; margin-left: 1px; } .small-a { font-size: 14px; align-items: flex-start; line-height: 24px; }
.big-a svg, .small-a svg { margin-top: 3px; }
.wen { flex-direction: column; }
.wen em { font: bold 7px/9px "Noto Sans"; } .wen strong { font-size: 11px; line-height: 13px; font-weight: 400; color: #2b42b4; }
.g-align .body { background: linear-gradient(#dde0e4, #c4c9cf 50%, #e0e3e7) 125px 12px / 1px 55px no-repeat; }
.hot { height: 22px; border: 1px solid #c69a3c; border-radius: 3px; background: linear-gradient(#fbd574, #fde16c 50%, #fff18e); }
.ab { font: bold 11px "Liberation Serif"; fill: #222; } .aa { font: bold 9px "Liberation Serif"; fill: #111; }
.pct { font: 14px "Noto Sans"; color: #333; } .comma { font: bold 22px/10px "Liberation Serif"; padding-bottom: 8px; color: #333; }
.dec { flex-direction: column; align-items: flex-end; padding-right: 2px; }
.dec em { display: flex; align-items: center; font: 8px/9px "Liberation Sans"; color: #222; -webkit-text-stroke: .2px #222; }
.list { padding-top: 1px; } .list .row { height: 22px; }
.list span { margin-left: 3px; color: #333; line-height: 18px; } .list .dd { margin-left: 5px; }
.g-style .list { padding-left: 7px; } .g-cell .list { padding-left: 6px; }
.edits { width: 36px; padding-left: 6px; } .list .sig { margin-left: 0; }
.sig { font: bold 14px "DejaVu Sans"; }
.b2, .b3 { width: 65px; padding-top: 5px; }
.b2 span, .b3 span { padding-top: 4px; }
.b2 svg, .b3 svg { height: 30px; }
.b2 .dd, .b3 .dd { margin-top: 6px; }

.fbar { height: 26px; flex: none; background: linear-gradient(#d4d8de 3px, #8f979f 3px, #8f979f 4px, #fff 4px, #fff 22px, #8f979f 22px, #8f979f 23px, #e2e6ec 23px); display: flex; padding: 4px 0 4px; }
.namebox { width: 160px; display: flex; align-items: center; padding: 1px 0 0 58px; font-family: "Liberation Serif"; font-size: 14px; letter-spacing: .6px; color: #000; }
.namebox .dd { margin-left: 61px; width: 8px; }
.namebox span { width: 27px; flex: none; }
.fx { width: 77px; display: flex; justify-content: space-between; align-items: center; background: #dde1e7; border-left: 1px solid #9ca4ae; border-right: 1px solid #9ca4ae; border-radius: 9px 0 0 9px; padding: 0 5px 0 4px; }
.fx span { font: italic bold 16px/16px "Liberation Serif"; color: #333; } .fx small { font-size: 12px; }
.knob { width: 9px; height: 9px; border-radius: 50%; background: linear-gradient(#a9b0b8, #fff); }
.finput { width: 770px; }
.fdrop { width: 17px; background: #dde1e7; border: 1px solid #a6adb6; display: flex; align-items: center; justify-content: center; }

.work { height: 510px; flex: none; display: flex; }
.sheet { width: 1004px; overflow: hidden; position: relative; background: #fff; }
table { table-layout: fixed; width: 1004px; border-collapse: separate; border-spacing: 0; font-family: "Liberation Serif", "Noto Sans CJK SC", serif; font-size: 21px; }
col { width: 104px; } .c0 { width: 43px; } .cz { width: 25px; }
th, td { height: 26px; padding: 0; line-height: 20px; border-right: 1px solid #d8dadd; border-bottom: 1px solid #d8dadd; white-space: nowrap; overflow: visible; }
td:last-child { border-right: 0; }
th { background: #dfe3e8; font-weight: 400; color: #262626; border-color: #a7adb5; padding-top: 4px; font-size: 21px; }
tr.hd th { height: 28px; border-top: 1px solid #8f979f; }
tr.tall > * { height: 28px; }
.corner { margin: -2px 0 0 20px; }
th.sel { background: linear-gradient(#fdcb58, #fff17a); border-color: #c69a46; }
tr:not(.hd) th.sel { background: linear-gradient(90deg, #fdd35f, #ffdf70); }
.ttl { text-align: center; color: #000; letter-spacing: 1px; -webkit-text-stroke: .5px #000; }
td.k { border-color: #000; color: #000; padding: 3px 2px 0 3px; letter-spacing: .6px; }
td.k.id { padding-left: 5px; letter-spacing: 4px; } td.k.hid { padding-left: 4px; letter-spacing: 1.6px; }
td.k.zh { padding: 0 0 0 4px; letter-spacing: -.2px; }
td.cap { text-align: center; }
td.k.n { text-align: right; letter-spacing: .2px; padding-right: 3px; }
.frame { position: relative; }
.frame::before { content: ""; position: absolute; left: -2px; top: -2px; width: 314px; height: 134px; border: 2px solid #000; z-index: 1; }
.cursor { position: relative; }
.cursor::before { content: ""; position: absolute; left: -2px; top: -2px; width: 107px; height: 29px; border: 2px solid #000; outline: 1px solid #222; outline-offset: -3px; }
.cursor::after { content: ""; position: absolute; left: 100px; top: 22px; width: 7px; height: 7px; background: #000; border: 1px solid #fff; }
.ink { position: absolute; left: 450px; top: 210px; z-index: 2; }
.ink path { fill: none; stroke: #f00; stroke-width: 3; stroke-linecap: round; } .ink .thin { stroke-width: 2; stroke-linecap: butt; }
.vscroll { width: 20px; background: linear-gradient(90deg, #d9dde5 16px, #8c949e 16px, #8c949e 17px, #eef1f5 17px); display: flex; flex-direction: column; border-top: 1px solid #8f979f; padding-right: 4px; align-items: center; }
.split { width: 14px; height: 7px; border: 1px solid #7b838d; background: #fff; }
.tri { width: 0; height: 0; flex: none; border: 4.5px solid transparent; }
.up { border-top: 0; border-bottom: 5px solid #4c5259; margin-top: 7px; }
.down { border-bottom: 0; border-top: 5px solid #4c5259; margin-top: 53px; }
.vthumb { width: 16px; height: 420px; margin-top: 6px; border: 1px solid #8c949e; border-radius: 1px; background: linear-gradient(90deg, #f4f6f9, #dde1e8); display: flex; align-items: center; justify-content: center; }
.grip { width: 8px; height: 8px; background: repeating-linear-gradient(#8c949e 0 1px, transparent 1px 2px); }

.sheetbar { height: 16px; flex: none; display: flex; background: #dbe0e9; border-top: 1px solid #9aa2ac; }
.sheetbar > svg { margin-top: -1px; }
.st { font: 13.500px "Liberation Serif"; letter-spacing: .75px; fill: #444; }
.hscroll { margin-left: auto; width: 422px; display: flex; align-items: center; }
.hsplit { width: 8px; height: 14px; border: 1px solid #7b838d; background: linear-gradient(90deg, #fff 2px, #7b838d 2px, #7b838d 3px, #fff 3px); }
.left { border-left: 0; border-right: 5px solid #4c5259; margin-left: 5px; }
.right { border-right: 0; border-left: 5px solid #4c5259; margin: 0 6px; }
.hthumb { width: 316px; height: 15px; margin-left: 43px; border: 1px solid #8c949e; border-radius: 2px; background: linear-gradient(#f4f6f9, #dde1e8); display: flex; justify-content: center; align-items: center; }
.vgrip { width: 7px; height: 7px; background: repeating-linear-gradient(90deg, #8c949e 0 1px, transparent 1px 2px); }

.status { height: 23px; flex: none; background: linear-gradient(#f1f3f5, #d5d9dd 40%, #bcc0c5); border-top: 1px solid #8f979f; display: flex; align-items: center; }
.ready { width: 41px; padding: 0 0 2px 8px; }
.vl { width: 1px; height: 20px; background: #90969d; } .two { margin-left: 735px; margin-right: 4px; }
.view { width: 20px; height: 18px; display: flex; align-items: center; justify-content: center; } .view.on { background: #ffe27a; border: 1px solid #c69a3c; border-radius: 2px; }

.taskbar { height: 39px; flex: none; display: flex; align-items: center; background: radial-gradient(ellipse at 900px 10px, rgba(90,40,40,.6) 0, transparent 100px), linear-gradient(#6b7377 0, #2b3036 2px, #15191e 12px, #090c12); color: #fff; border-top: 1px solid #20262b; }
.orb { margin-left: 8px; }
.task { height: 38px; width: 74px; display: flex; align-items: center; border: 1px solid #858a8f; border-radius: 3px; background: linear-gradient(155deg, #85898d, #4a4e53 40%, #20242a 55%, #34383d); font: 12.500px "Noto Sans"; padding-left: 5px; gap: 5px; white-space: nowrap; }
.t-chrome { margin-left: 14px; } .note { margin: 0 14px 0 11px; } .t-d, .t-ub, .t-xl { margin-left: 4px; }
.t-d, .t-ub { padding-left: 6px; } .t-ub { padding-left: 7px; } .t-aid { padding-left: 4px; }
.t-d span, .t-aid span { margin-left: -1px; }
.t-d svg { margin-left: -3px; } .t-ub span { margin-left: -1px; }
.t-xl { background: linear-gradient(155deg, #ccc, #999 45%, #777 60%, #999); border-color: #d4d4d4; }
.addr { margin-left: 13px; width: 29px; white-space: nowrap; }
.addrbox { width: 235px; height: 24px; border: 1px solid #777; background: #fff; display: flex; align-items: center; justify-content: flex-end; padding-right: 5px; }
.addrbox .dd { border-top-color: #000; }
.refresh { width: 26px; height: 24px; background: #fff; border: 1px solid #777; display: flex; align-items: center; justify-content: center; margin-left: -1px; }
.tray { margin-left: auto; }
.ime { position: absolute; left: 818px; top: 700px; background: linear-gradient(transparent 4px, #9fc0dd 4px, #f2f9ff 5px, #f7fbff 28px, transparent 28px); z-index: 3; }
.n31 { font: bold 7px "Noto Sans"; fill: #1d74c9; }
.peek { position: absolute; left: 1017px; top: 4px; width: 9px; height: 60px; border: 1px solid #62676e; background: linear-gradient(#fff, #dff0f8 30%, #fff); z-index: 4; }
.peek::after { content: ""; position: absolute; left: 5px; top: 25px; width: 2px; height: 28px; background: #222; }
```
